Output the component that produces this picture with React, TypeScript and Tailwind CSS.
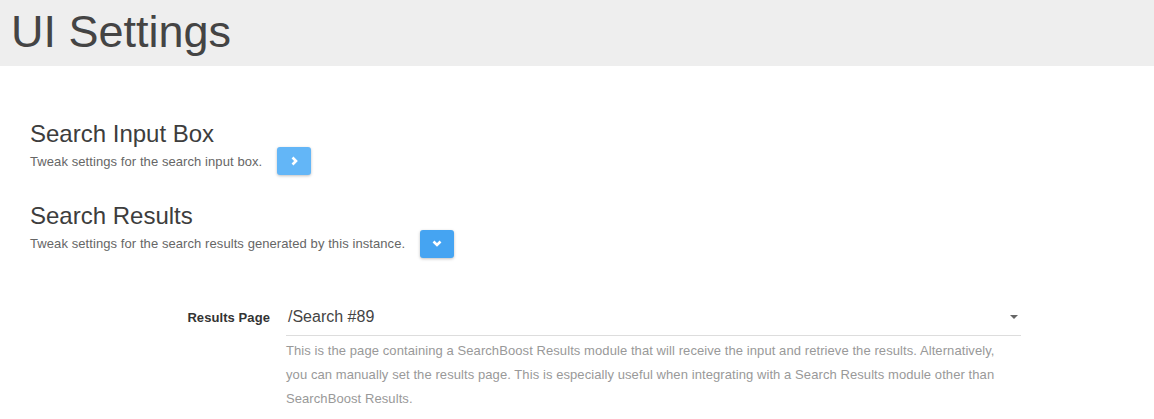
import React from "react";

const font = { fontFamily: '"Liberation Sans", Arial, Helvetica, sans-serif' };

const Chevron: React.FC<{ down?: boolean }> = ({ down }) =>
  down ? (
    <svg width="10" height="7" viewBox="0 0 10 7">
      <polyline points="1.5,1.5 5,5 8.5,1.5" fill="none" stroke="white" strokeWidth="2.6" />
    </svg>
  ) : (
    <svg width="7" height="10" viewBox="0 0 7 10">
      <polyline points="1.5,1.5 5,5 1.5,8.5" fill="none" stroke="white" strokeWidth="2.6" />
    </svg>
  );

const ToggleButton: React.FC<{ open?: boolean }> = ({ open }) => (
  <button
    type="button"
    className={
      "ml-[15px] flex h-[28px] w-[34px] items-center justify-center rounded-[3px] shadow-[0_1px_3px_rgba(0,0,0,0.25)] " +
      (open ? "bg-[#45a4f2]" : "bg-[#63b6f7]")
    }
  >
    <Chevron down={open} />
  </button>
);

const Section: React.FC<{ title: string; text: string; open?: boolean }> = ({
  title,
  text,
  open,
}) => (
  <div>
    <h3 className="text-[24px] leading-[1.1] text-[#3d3d3d]">{title}</h3>
    <div className="flex h-[28px] items-center">
      <p className="text-[13px] tracking-[0.08px] text-[#666]">{text}</p>
      <ToggleButton open={open} />
    </div>
  </div>
);

export default function App() {
  return (
    <div className="min-h-screen bg-white" style={font}>
      <header className="h-[66px] bg-[#eeeeee] pl-[11px] pt-[7px]">
        <h1 className="text-[45px] leading-[1.1] text-[#444]">UI Settings</h1>
      </header>

      <main className="pl-[30px]">
        <div className="mt-[55px]">
          <Section title="Search Input Box" text="Tweak settings for the search input box." />
        </div>
        <div className="mt-[28px]">
          <Section
            title="Search Results"
            text="Tweak settings for the search results generated by this instance."
            open
          />
        </div>

        <div className="mt-[42px] flex items-center">
          <label className="w-[240px] shrink-0 text-right text-[13px] font-bold leading-[16px] tracking-[0.08px] text-[#333]">
            Results Page
          </label>
          <div className="ml-[16px] flex h-[36px] w-[735px] shrink-0 items-center border-b border-[#dddddd] pl-[2px]">
            <span className="text-[16px] leading-[20px] text-[#444]">/Search #89</span>
            <span className="ml-auto mr-[3px] h-0 w-0 border-x-[4px] border-t-[4px] border-x-transparent border-t-[#666]" />
          </div>
        </div>
        <p className="ml-[256px] mt-[3px] w-[718px] text-[13px] leading-[24px] tracking-[0.08px] text-[#999]">
          This is the page containing a SearchBoost Results module that will receive the input and
          retrieve the results. Alternatively, you can manually set the results page. This is
          especially useful when integrating with a Search Results module other than SearchBoost
          Results.
        </p>
      </main>
    </div>
  );
}
